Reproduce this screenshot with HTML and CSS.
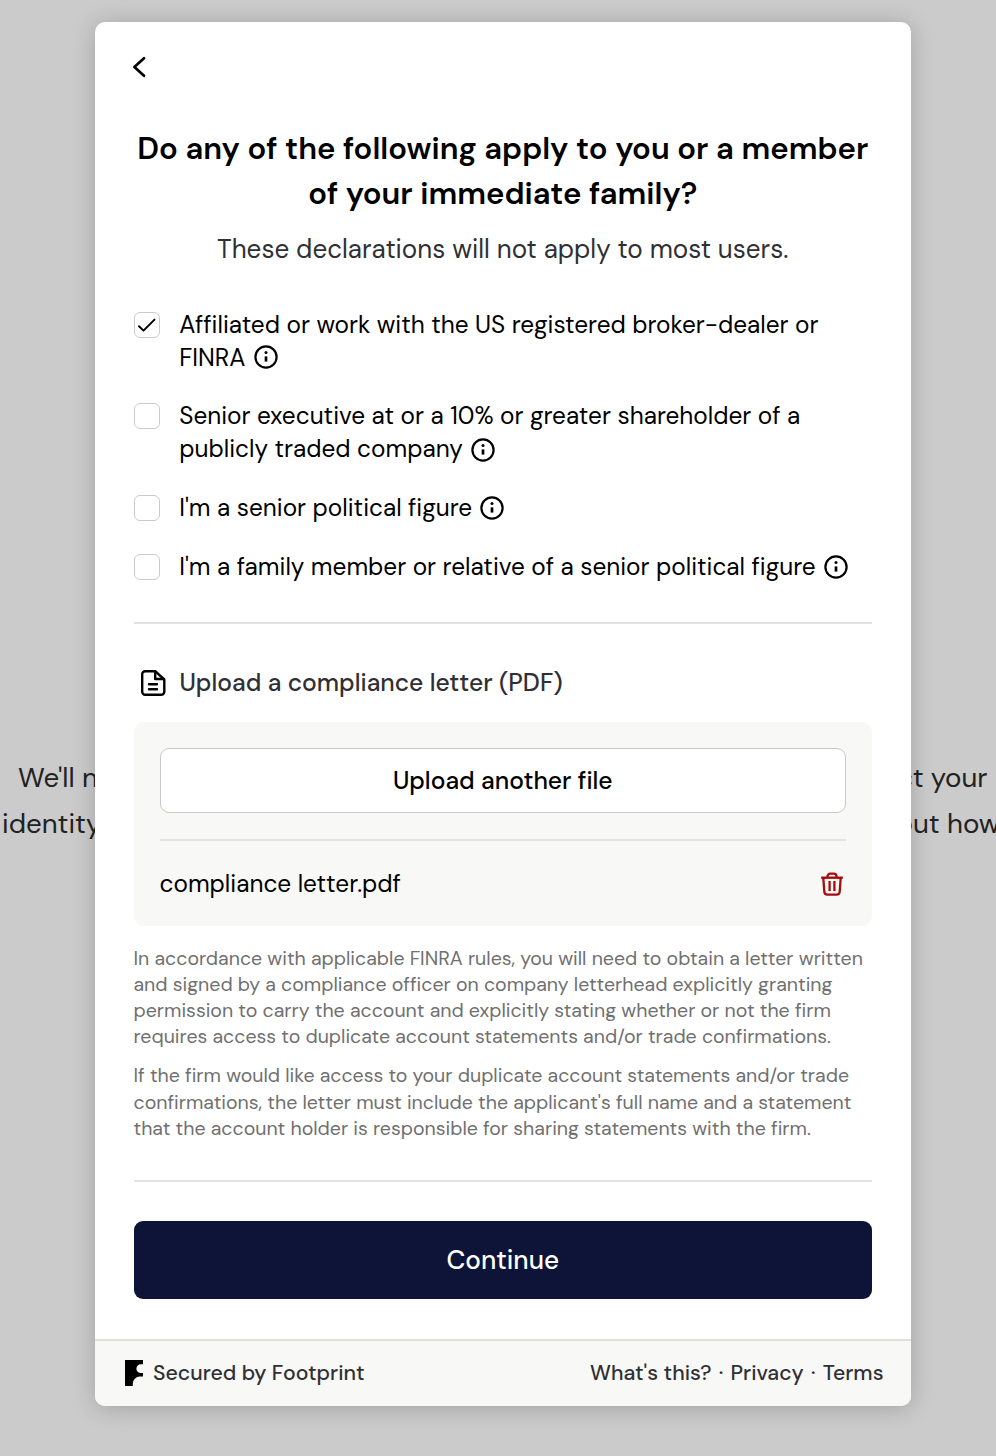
FILE: index.html
```html
<!DOCTYPE html>
<html lang="en">
<head>
<meta charset="utf-8">
<title>Declarations</title>
<link rel="stylesheet" href="styles.css">
</head>
<body>
<svg class="defs" aria-hidden="true">
  <symbol id="info" viewBox="0 0 24 24">
    <circle cx="12" cy="12" r="10.6" fill="none" stroke="currentColor" stroke-width="2.2"/>
    <circle cx="12" cy="7.6" r="1.5" fill="currentColor"/>
    <path d="M12 11.4v5.200" fill="none" stroke="currentColor" stroke-width="2.7"/>
  </symbol>
</svg>
<div class="backdrop-copy">
  <div class="backdrop-line first"><span>We'll need to collect</span><span>to help protect your</span></div>
  <div class="backdrop-line second"><span>identity information</span><span>Learn more about how</span></div>
</div>
<main class="card">
  <div class="content">
    <button class="back" aria-label="Back">
      <svg width="16" height="24" viewBox="0 0 16 24"><path d="M13 3.200 3.400 12l9.600 8.800" fill="none" stroke="#000" stroke-width="2.700" stroke-linecap="round" stroke-linejoin="round"/></svg>
    </button>
    <header class="heading">
      <h1>Do any of the following apply to you or a member<br>of your immediate family?</h1>
      <p>These declarations will not apply to most users.</p>
    </header>
    <div class="options">
      <label class="option"><span class="box"><svg width="20" height="20" viewBox="0 0 20 20"><path d="M2 11.300 6.500 15.600 17.500 4.600" fill="none" stroke="#000" stroke-width="2" stroke-linecap="round" stroke-linejoin="round"/></svg></span><span>Affiliated or work with the US registered broker-dealer or<br>FINRA <svg class="info raised"><use href="#info"/></svg></span></label>
      <label class="option"><span class="box"></span><span>Senior executive at or a 10% or greater shareholder of a<br>publicly traded company <svg class="info lowered"><use href="#info"/></svg></span></label>
      <label class="option"><span class="box"></span><span>I'm a senior political figure <svg class="info"><use href="#info"/></svg></span></label>
      <label class="option"><span class="box"></span><span>I'm a family member or relative of a senior political figure <svg class="info"><use href="#info"/></svg></span></label>
    </div>
    <hr>
    <h2 class="upload-title">
      <svg width="26" height="28" viewBox="0 0 26 28" fill="none" stroke="#000" stroke-width="2.4" stroke-linecap="round" stroke-linejoin="round"><path d="M15.200 2.200H5.200a3 3 0 0 0-3 3v17.600a3 3 0 0 0 3 3h16.100a3 3 0 0 0 3-3V10.500z"/><path d="M15.200 2.600V10h8.400M9 15.200h8M9 20.200h8"/></svg>
      <span>Upload a compliance letter (PDF)</span>
    </h2>
    <section class="upload">
      <button class="upload-button">Upload another file</button>
      <hr>
      <div class="file"><span>compliance letter.pdf</span>
        <svg width="24" height="26" viewBox="0 0 24 26" fill="none" stroke="#a70b0e" stroke-width="2.300"><path d="M1.200 6.700h21.600" stroke-width="2.400"/><path d="M3.300 6.700l1 14a3.200 3.200 0 0 0 3.200 3h9a3.200 3.200 0 0 0 3.200-3l1-14M7.500 6.200V5.400a2.700 2.700 0 0 1 2.700-2.700h3.600a2.700 2.700 0 0 1 2.700 2.700v.8M9.600 10v10M14.400 10v10"/></svg>
      </div>
    </section>
    <div class="notes">
      <p>In accordance with applicable FINRA rules, you will need to obtain a letter written<br>and signed by a compliance officer on company letterhead explicitly granting<br>permission to carry the account and explicitly stating whether or not the firm<br>requires access to duplicate account statements and/or trade confirmations.</p>
      <p>If the firm would like access to your duplicate account statements and/or trade<br>confirmations, the letter must include the applicant's full name and a statement<br>that the account holder is responsible for sharing statements with the firm.</p>
    </div>
    <hr>
    <button class="continue">Continue</button>
  </div>
  <footer class="footer">
    <div class="brand"><svg width="18" height="26" viewBox="0 0 18 26"><path d="M0 0h18v4.300h-2.200a4.400 4.400 0 0 0 0 8.800H18v3.500h-3.200A7 7 0 0 0 7.800 23.600V26H0z"/></svg><span>Secured by Footprint</span></div>
    <nav class="links"><a>What's this?</a><i>·</i><a>Privacy</a><i>·</i><a>Terms</a></nav>
  </footer>
</main>
</body>
</html>
```
FILE: styles.css
```css
* { box-sizing: border-box; }
body {
  margin: 0;
  height: 1456px;
  padding: 21.5px 0 0 94.5px;
  overflow: hidden;
  background: #cbcbcb;
  color: #000;
  font-family: "DM Sans", Inter, sans-serif;
  font-variant-ligatures: none;
}
h1, h2, p { margin: 0; }
button { font-family: inherit; font-variant-ligatures: inherit; cursor: pointer; }
hr { margin: 0; border: 0; height: 2px; background: #e2e2e2; }
.defs { position: absolute; width: 0; height: 0; }

/* Page copy visible behind the dialog */
.backdrop-copy {
  position: absolute;
  top: 755px;
  left: 0;
  width: 996px;
  color: #222;
  font-size: 27.7px;
  line-height: 46px;
  white-space: nowrap;
}
.backdrop-line { display: flex; justify-content: space-between; }
.first { padding: 0 8.5px 0 18px; }
.second { padding-left: 2px; margin-right: -4px; }

.card {
  position: relative;
  width: 816.5px;
  height: 1384px;
  display: flex;
  flex-direction: column;
  background: #fff;
  border-radius: 10px;
  overflow: hidden;
  box-shadow: 0 2px 24px rgba(0, 0, 0, .2);
}
.content { flex: 1; padding: 33px 39px 0; }
.back { display: block; height: 27px; margin: 0 0 44px -3px; padding: 0; border: 0; background: none; }
.heading { text-align: center; }
.heading h1 { font-size: 31.1px; font-weight: 600; line-height: 45.7px; white-space: nowrap; }
.heading p { margin-top: 13px; color: #303034; font-size: 26px; line-height: 39px; }

.options { display: grid; gap: 26.3px; margin: 40px 0 39px; font-size: 24.36px; line-height: 32.6px; }
.option { display: flex; gap: 19.8px; white-space: nowrap; }
.box {
  width: 26px;
  height: 26px;
  margin-top: 3px;
  display: grid;
  place-items: center;
  border: 1.6px solid #cbcbcf;
  border-radius: 6px;
}
.info { width: 24px; height: 24px; margin-left: 1.5px; vertical-align: -4px; }
.raised { vertical-align: -3px; }
.lowered { vertical-align: -5px; }

.upload-title {
  display: flex;
  align-items: center;
  gap: 13.5px;
  margin: 38.2px 0 19.6px;
  padding-left: 6.5px;
  color: #303034;
  font-size: 24.6px;
  font-weight: 500;
  line-height: 39px;
}
.upload-title span { padding-top: 1px; }
.upload { padding: 26px; border-radius: 10px; background: #f8f8f7; }
.upload-button {
  display: block;
  width: 100%;
  height: 65.3px;
  margin-bottom: 26px;
  border: 1.6px solid #c9c9cc;
  border-radius: 9px;
  background: #fff;
  color: #000;
  font-size: 24.6px;
  font-weight: 500;
}
.file { display: flex; align-items: center; justify-content: space-between; margin-top: 26px; font-size: 24.38px; line-height: 32.6px; }
.file span { padding-top: 1px; margin-bottom: -1px; }
.file svg { margin-right: 2px; }
.notes {
  display: grid;
  gap: 13px;
  margin: 20px 0 38.5px;
  color: #707070;
  font-size: 19.52px;
  line-height: 26.1px;
  white-space: nowrap;
}
.continue {
  display: block;
  width: 100%;
  height: 78.3px;
  margin-top: 39px;
  border: 0;
  border-radius: 9px;
  background: #0d1438;
  color: #fff;
  font-size: 26.1px;
  font-weight: 500;
}
.footer {
  height: 66.5px;
  display: flex;
  align-items: center;
  justify-content: space-between;
  padding: 0 27.5px 0 30px;
  border-top: 2px solid #dfdfdf;
  background: #f8f8f7;
  color: #303034;
  font-size: 21.25px;
  font-weight: 500;
}
.brand { display: flex; align-items: center; gap: 10.5px; }
.links { display: flex; }
.links i { width: 19px; text-align: center; font-style: normal; }
```
